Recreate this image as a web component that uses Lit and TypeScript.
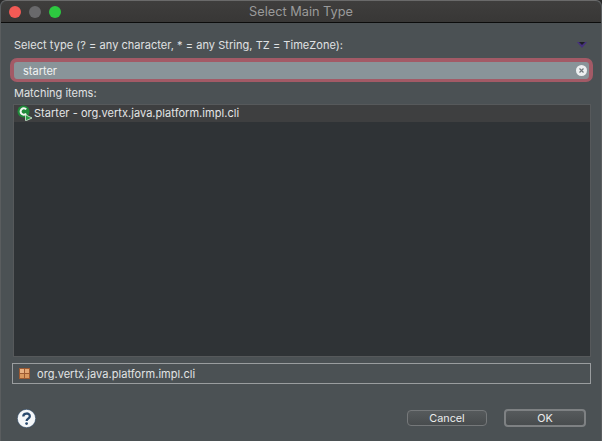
import { LitElement, html, css } from "lit";
import { customElement } from "lit/decorators.js";

@customElement("app-root")
export class AppRoot extends LitElement {
  static styles = css`
    :host { display: block; width: 602px; height: 441px; overflow: hidden; background: #2a2a2a; font-family: "Inter", "Liberation Sans", Arial, sans-serif; }
    * { box-sizing: border-box; }
    .win { height: 441px; display: flex; flex-direction: column; background: #4b5154; border-radius: 6px 6px 0 0; border-left: 1px solid #5a5d5f; border-top: 1px solid #6a6a6a; border-right: 1px solid #5a5d5f; }
    .title { height: 22px; flex: none; display: flex; align-items: center; justify-content: center; position: relative; background: linear-gradient(#3f3e3d, #383736); border-bottom: 1px solid #0c0c0c; color: #9a9a9a; font-size: 12.75px; border-radius: 6px 6px 0 0; }
    .lights { position: absolute; left: 8px; top: 5px; display: flex; gap: 8px; }
    .light { width: 12px; height: 12px; border-radius: 50%; }
    .red { background: #f25a55; }
    .grey { background: #69696b; }
    .green { background: #2dc840; }
    .content { flex: 1; display: flex; flex-direction: column; padding: 0 10px 0 9px; min-height: 0; }
    .labelrow { display: flex; justify-content: space-between; align-items: center; height: 14px; margin-top: 15px; padding: 0 6px 0 4px; width: 583px; }
    .label { color: #e0e2e3; font-size: 11px; letter-spacing: 0.04px; line-height: 14px; white-space: nowrap; }
    .tri { width: 10px; height: 6px; display: block; }
    .search { height: 24px; width: 583px; margin-top: 6px; border: 4px solid #a35a66; border-bottom-width: 3px; border-radius: 7px; background: #899499; display: flex; align-items: center; justify-content: space-between; padding: 0 2px 0 9px; color: #f0f2f3; font-size: 11px; }
    .clear { width: 11px; height: 11px; display: block; }
    .match { margin: 4px 0 0 4px; color: #e0e2e3; font-size: 11px; line-height: 14px; }
    .list { height: 253px; width: 578px; margin: 4px 0 0 3px; background: #2f3336; border: 1px solid #56595b; }
    .row { height: 17px; background: #3e3f40; display: flex; align-items: center; color: #e4e5e6; font-size: 11px; letter-spacing: 0.04px; padding: 0 0 1px 3px; gap: 1px; }
    .cicon { width: 16px; height: 16px; flex: none; display: block; }
    .field { height: 21px; margin: 6px 0 0 2px; width: 579px; border: 1px solid #9a9d9f; display: flex; align-items: center; gap: 7px; padding-left: 6px; color: #e2e4e5; font-size: 11px; letter-spacing: 0.04px; }
    .pkg { width: 11px; height: 11px; flex: none; display: block; }
    .foot { display: flex; align-items: center; justify-content: space-between; margin-top: 25px; padding-left: 7px; padding-right: 5px; height: 18px; }
    .help { width: 19px; height: 19px; flex: none; display: block; }
    .btns { display: flex; gap: 17px; align-items: center; }
    .btn { width: 80px; height: 16px; border: 1px solid #75787a; border-radius: 4px; background: linear-gradient(#565a5c, #484c4e); color: #eceded; font: inherit; font-size: 10.8px; padding: 0; display: flex; align-items: center; justify-content: center; }
    .ok { width: 82px; height: 18px; border: 2px solid #7e8183; }
  `;

  render() {
    return html`<div class="win">
      <div class="title">
        <div class="lights"><span class="light red"></span><span class="light grey"></span><span class="light green"></span></div>
        Select Main Type
      </div>
      <div class="content">
        <div class="labelrow">
          <span class="label">Select type (? = any character, * = any String, TZ = TimeZone):</span>
          <svg class="tri" viewBox="0 0 10 6"><path d="M0 0H10L5 6Z" fill="#46307e"/><path d="M2 0H8L5 3Z" fill="#1d1d25"/></svg>
        </div>
        <div class="search">
          <span>starter</span>
          <svg class="clear" viewBox="0 0 11 11"><circle cx="5.5" cy="5.5" r="5.5" fill="#eef0f1"/><path d="M3.5 3.5L7.5 7.5M7.5 3.5L3.5 7.5" stroke="#70777b" stroke-width="1.2"/></svg>
        </div>
        <div class="match">Matching items:</div>
        <div class="list">
          <div class="row">
            <svg class="cicon" viewBox="0 0 16 16">
              <circle cx="6.5" cy="6.5" r="6" fill="#1f8a3a"/>
              <path d="M9.2 4.4A3.2 3.2 0 1 0 9.2 8.6" fill="none" stroke="#f2f7f2" stroke-width="2"/>
              <path d="M8.5 10V15.5H9.5L15 13L9 10Z" fill="#2a9a45" stroke="#dff0e0" stroke-width="0.8"/>
            </svg>
            <span>Starter - org.vertx.java.platform.impl.cli</span>
          </div>
        </div>
        <div class="field">
          <svg class="pkg" viewBox="0 0 11 11"><rect width="11" height="11" fill="#9c5a32"/><rect x="1" y="1" width="4" height="4" fill="#e8b183"/><rect x="6" y="1" width="4" height="4" fill="#e3a673"/><rect x="1" y="6" width="4" height="4" fill="#d9985f"/><rect x="6" y="6" width="4" height="4" fill="#d9985f"/></svg>
          <span>org.vertx.java.platform.impl.cli</span>
        </div>
        <div class="foot">
          <svg class="help" viewBox="0 0 19 19"><circle cx="9.5" cy="9.5" r="9.2" fill="#f4f6f8"/><circle cx="9.5" cy="9.5" r="9.2" fill="none" stroke="#24405e" stroke-width="0.6"/><path d="M6.3 7.4C6.3 3.6 12.8 3.6 12.8 7.2C12.8 9.6 9.6 9.6 9.6 12" fill="none" stroke="#2a4a6e" stroke-width="2.3"/><circle cx="9.6" cy="14.6" r="1.4" fill="#2a4a6e"/></svg>
          <div class="btns">
            <button class="btn">Cancel</button>
            <button class="btn ok">OK</button>
          </div>
        </div>
      </div>
    </div>`;
  }
}
